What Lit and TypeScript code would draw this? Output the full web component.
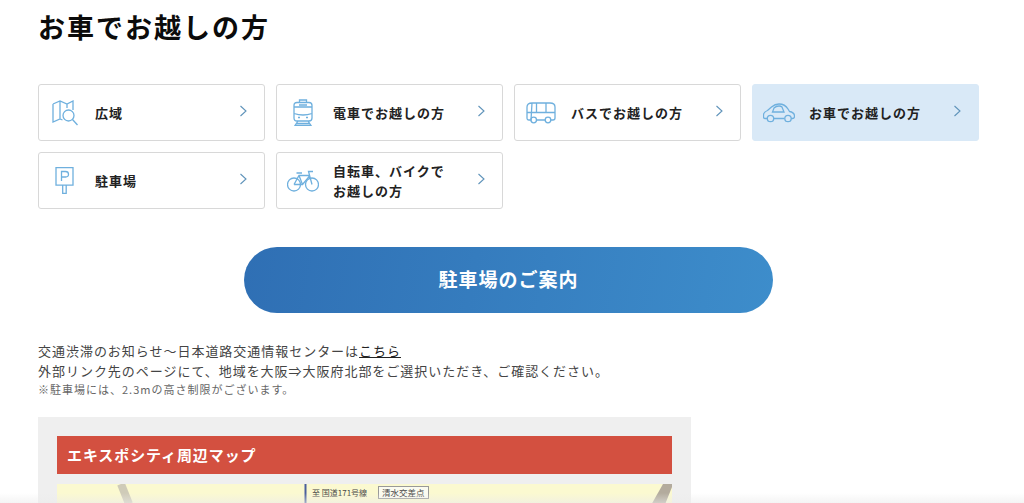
import { LitElement, html, css, svg } from "lit";
import { customElement } from "lit/decorators.js";

const icons: Record<string, unknown> = {
  map: svg`<svg class="ic" width="26" height="26" viewBox="0 0 26 26"><path d="M1 4 8 1l7 3 6-3v9M1 4v18l7-3 2.500 1M8 1v18M15 4v4"/><circle cx="16.500" cy="15.500" r="5.500"/><path d="m20.500 19.500 5 5.500"/></svg>`,
  train: svg`<svg class="ic" width="20" height="27" viewBox="0 0 20 27"><path d="M6.500 3.500V1h7v2.500M4 3.500h12q3 0 3 3V19q0 3-3 3H4q-3 0-3-3V6.500q0-3 3-3ZM1 8h18v6.500q-9 3-18 0ZM6 6h8M5 18.500h2M13 18.500h2M5 22l-3 4.500h16L15 22M3.500 24.500h13"/></svg>`,
  bus: svg`<svg class="ic" width="30" height="22" viewBox="0 0 30 22"><path d="M6 1h18q5 0 5 4v11q0 2-2 2h-2.500M19.500 18h-9M5 18H3q-2 0-2-2V5q0-4 5-4ZM1 10.500h28M10.500 1v9.500M20 1v9.500"/><circle cx="7.700" cy="18" r="2.800"/><circle cx="22" cy="18" r="2.800"/></svg>`,
  car: svg`<svg class="ic" width="32" height="20" viewBox="0 0 32 20"><path d="M4.500 15.500H2q-1.500 0-1.500-2V12q0-3 4-4.500L8.500 4Q12 1 16 1q6 0 9 5l1.500 2.500q5 1 5 4.500v.5q0 2-2 2H28M21.500 15.500h-11M9.500 9h11.500l-2-5q-1-1-3-1-3 0-5 2Z"/><circle cx="7.500" cy="15.500" r="3.200"/><circle cx="25" cy="15.500" r="3.200"/></svg>`,
  parking: svg`<svg class="ic" width="19" height="27" viewBox="0 0 19 27"><path d="M1 .700h17v17.500H1ZM7.700 18.200V26.500h3.500v-8.300M6.500 14V4.500h4q3 0 3 2.800t-3 2.700h-4"/></svg>`,
  bike: svg`<svg class="ic" width="32" height="22" viewBox="0 0 32 22"><circle cx="7" cy="14.500" r="6.500"/><circle cx="25" cy="14.500" r="6.500"/><path d="M7 14.500 12 5.500h11M7 14.500h8.500l7.500-9M25 14.500 21.500 1.500h4.500M9.500 3H15M12 5.500l3.500 9"/></svg>`,
};

const items = [
  { i: "map", t: html`広域` },
  { i: "train", t: html`電車でお越しの方` },
  { i: "bus", t: html`バスでお越しの方` },
  { i: "car", t: html`お車でお越しの方`, active: true },
  { i: "parking", t: html`駐車場` },
  { i: "bike", t: html`自転車、バイクで<br />お越しの方` },
];

@customElement("app-root")
export class AppRoot extends LitElement {
  static styles = css`
    :host {
      display: block;
      height: 503px;
      overflow: hidden;
      position: relative;
      background: #fff;
      color: #111;
      font-family: "Noto Sans CJK JP", "Noto Sans", sans-serif;
    }
    .page {
      padding: 7px 0 0 38px;
    }
    h1 {
      margin: 0;
      font-size: 27px;
      line-height: 40px;
      letter-spacing: 2px;
      font-weight: 700;
      color: #0b0b0b;
    }
    .grid {
      display: grid;
      grid-template-columns: repeat(4, 227px);
      grid-auto-rows: 57px;
      column-gap: 11px;
      row-gap: 11px;
      margin-top: 37px;
    }
    .card {
      box-sizing: border-box;
      display: flex;
      align-items: center;
      border: 1px solid #d8d8d8;
      border-radius: 3px;
      background: #fff;
      position: relative;
    }
    .card.active {
      background: #d9e9f7;
      border-color: #d9e9f7;
    }
    .icon {
      width: 51px;
      flex: none;
      display: flex;
      justify-content: center;
      align-items: center;
      margin-right: 5px;
    }
    .ic {
      fill: none;
      stroke: #6fb0de;
      stroke-width: 1.3;
    }
    .label {
      flex: 1;
      font-size: 13px;
      font-weight: 700;
      line-height: 20px;
      letter-spacing: 1px;
      color: #222;
      white-space: nowrap;
    }
    .chev {
      flex: none;
      margin: 0 17px 3px 0;
      fill: none;
      stroke: #5f93ba;
      stroke-width: 1.1;
    }
    .cta-wrap {
      display: flex;
      justify-content: flex-start;
      margin: 38px 0 0 206px;
    }
    .cta {
      box-sizing: border-box;
      width: 529px;
      height: 66px;
      padding-bottom: 3px;
      border-radius: 33px;
      background: linear-gradient(100deg, #2f6fb4, #3d8dcb);
      color: #fff;
      display: flex;
      align-items: center;
      justify-content: center;
      font-size: 19px;
      font-weight: 700;
      letter-spacing: 1px;
    }
    .notes {
      margin-top: 28px;
      font-size: 13px;
      line-height: 20px;
      color: #444;
      letter-spacing: 0.97px;
    }
    .notes a {
      color: #222;
      text-decoration: underline;
    }
    .small {
      font-size: 11px;
      line-height: 17px;
      color: #666;
      letter-spacing: 1px;
    }
    .panel {
      margin-top: 19px;
      width: 653px;
      height: 120px;
      box-sizing: border-box;
      background: #efefef;
      padding: 19px;
    }
    .bar {
      height: 38px;
      background: #d35040;
      color: #fff;
      font-size: 15px;
      font-weight: 700;
      line-height: 38px;
      padding-left: 10px;
      letter-spacing: 0.9px;
    }
    .map {
      margin-top: 10px;
      height: 60px;
      background: #fbf9d0;
      position: relative;
      overflow: hidden;
    }
    .map svg {
      position: absolute;
      inset: 0;
    }
    .to {
      position: absolute;
      left: 255px;
      top: 3px;
      font-size: 8px;
      line-height: 11px;
      color: #444;
      white-space: nowrap;
    }
    .stop {
      position: absolute;
      left: 321px;
      top: 2px;
      font-size: 8.500px;
      line-height: 11px;
      padding: 0 3px;
      border: 1px solid #999;
      background: #fbfbf0;
      color: #444;
      white-space: nowrap;
    }
    .fade {
      position: absolute;
      left: 0;
      right: 0;
      bottom: 0;
      height: 10px;
      background: linear-gradient(rgba(255, 255, 255, 0), rgba(235, 235, 235, 0.55));
    }
  `;

  render() {
    return html`
      <div class="page">
        <h1>お車でお越しの方</h1>
        <div class="grid">
          ${items.map(
            (it) => html`
              <div class="card ${it.active ? "active" : ""}">
                <div class="icon">${icons[it.i]}</div>
                <div class="label">${it.t}</div>
                <svg class="chev" width="8" height="12" viewBox="0 0 8 12"><path d="m1.500 1 5.500 5-5.500 5" /></svg>
              </div>
            `
          )}
        </div>
        <div class="cta-wrap"><div class="cta">駐車場のご案内</div></div>
        <div class="notes">
          交通渋滞のお知らせ〜日本道路交通情報センターは<a>こちら</a><br />
          外部リンク先のページにて、地域を大阪⇒大阪府北部をご選択いただき、ご確認ください。
          <div class="small">※駐車場には、2.3mの高さ制限がございます。</div>
        </div>
        <div class="panel">
          <div class="bar">エキスポシティ周辺マップ</div>
          <div class="map">
            <svg width="615" height="60" viewBox="0 0 615 60">
              <path d="M64 0 72 20" stroke="#cfcbb8" stroke-width="8" fill="none" />
              <path d="M248.500 0V20" stroke="#4a5f9c" stroke-width="2" fill="none" />
              <path d="M606 0h9v3l-8 20h-14Z" fill="#b3ab9d" />
            </svg>
            <span class="to">至 国道171号線</span>
            <span class="stop">清水交差点</span>
          </div>
        </div>
      </div>
      <div class="fade"></div>
    `;
  }
}
